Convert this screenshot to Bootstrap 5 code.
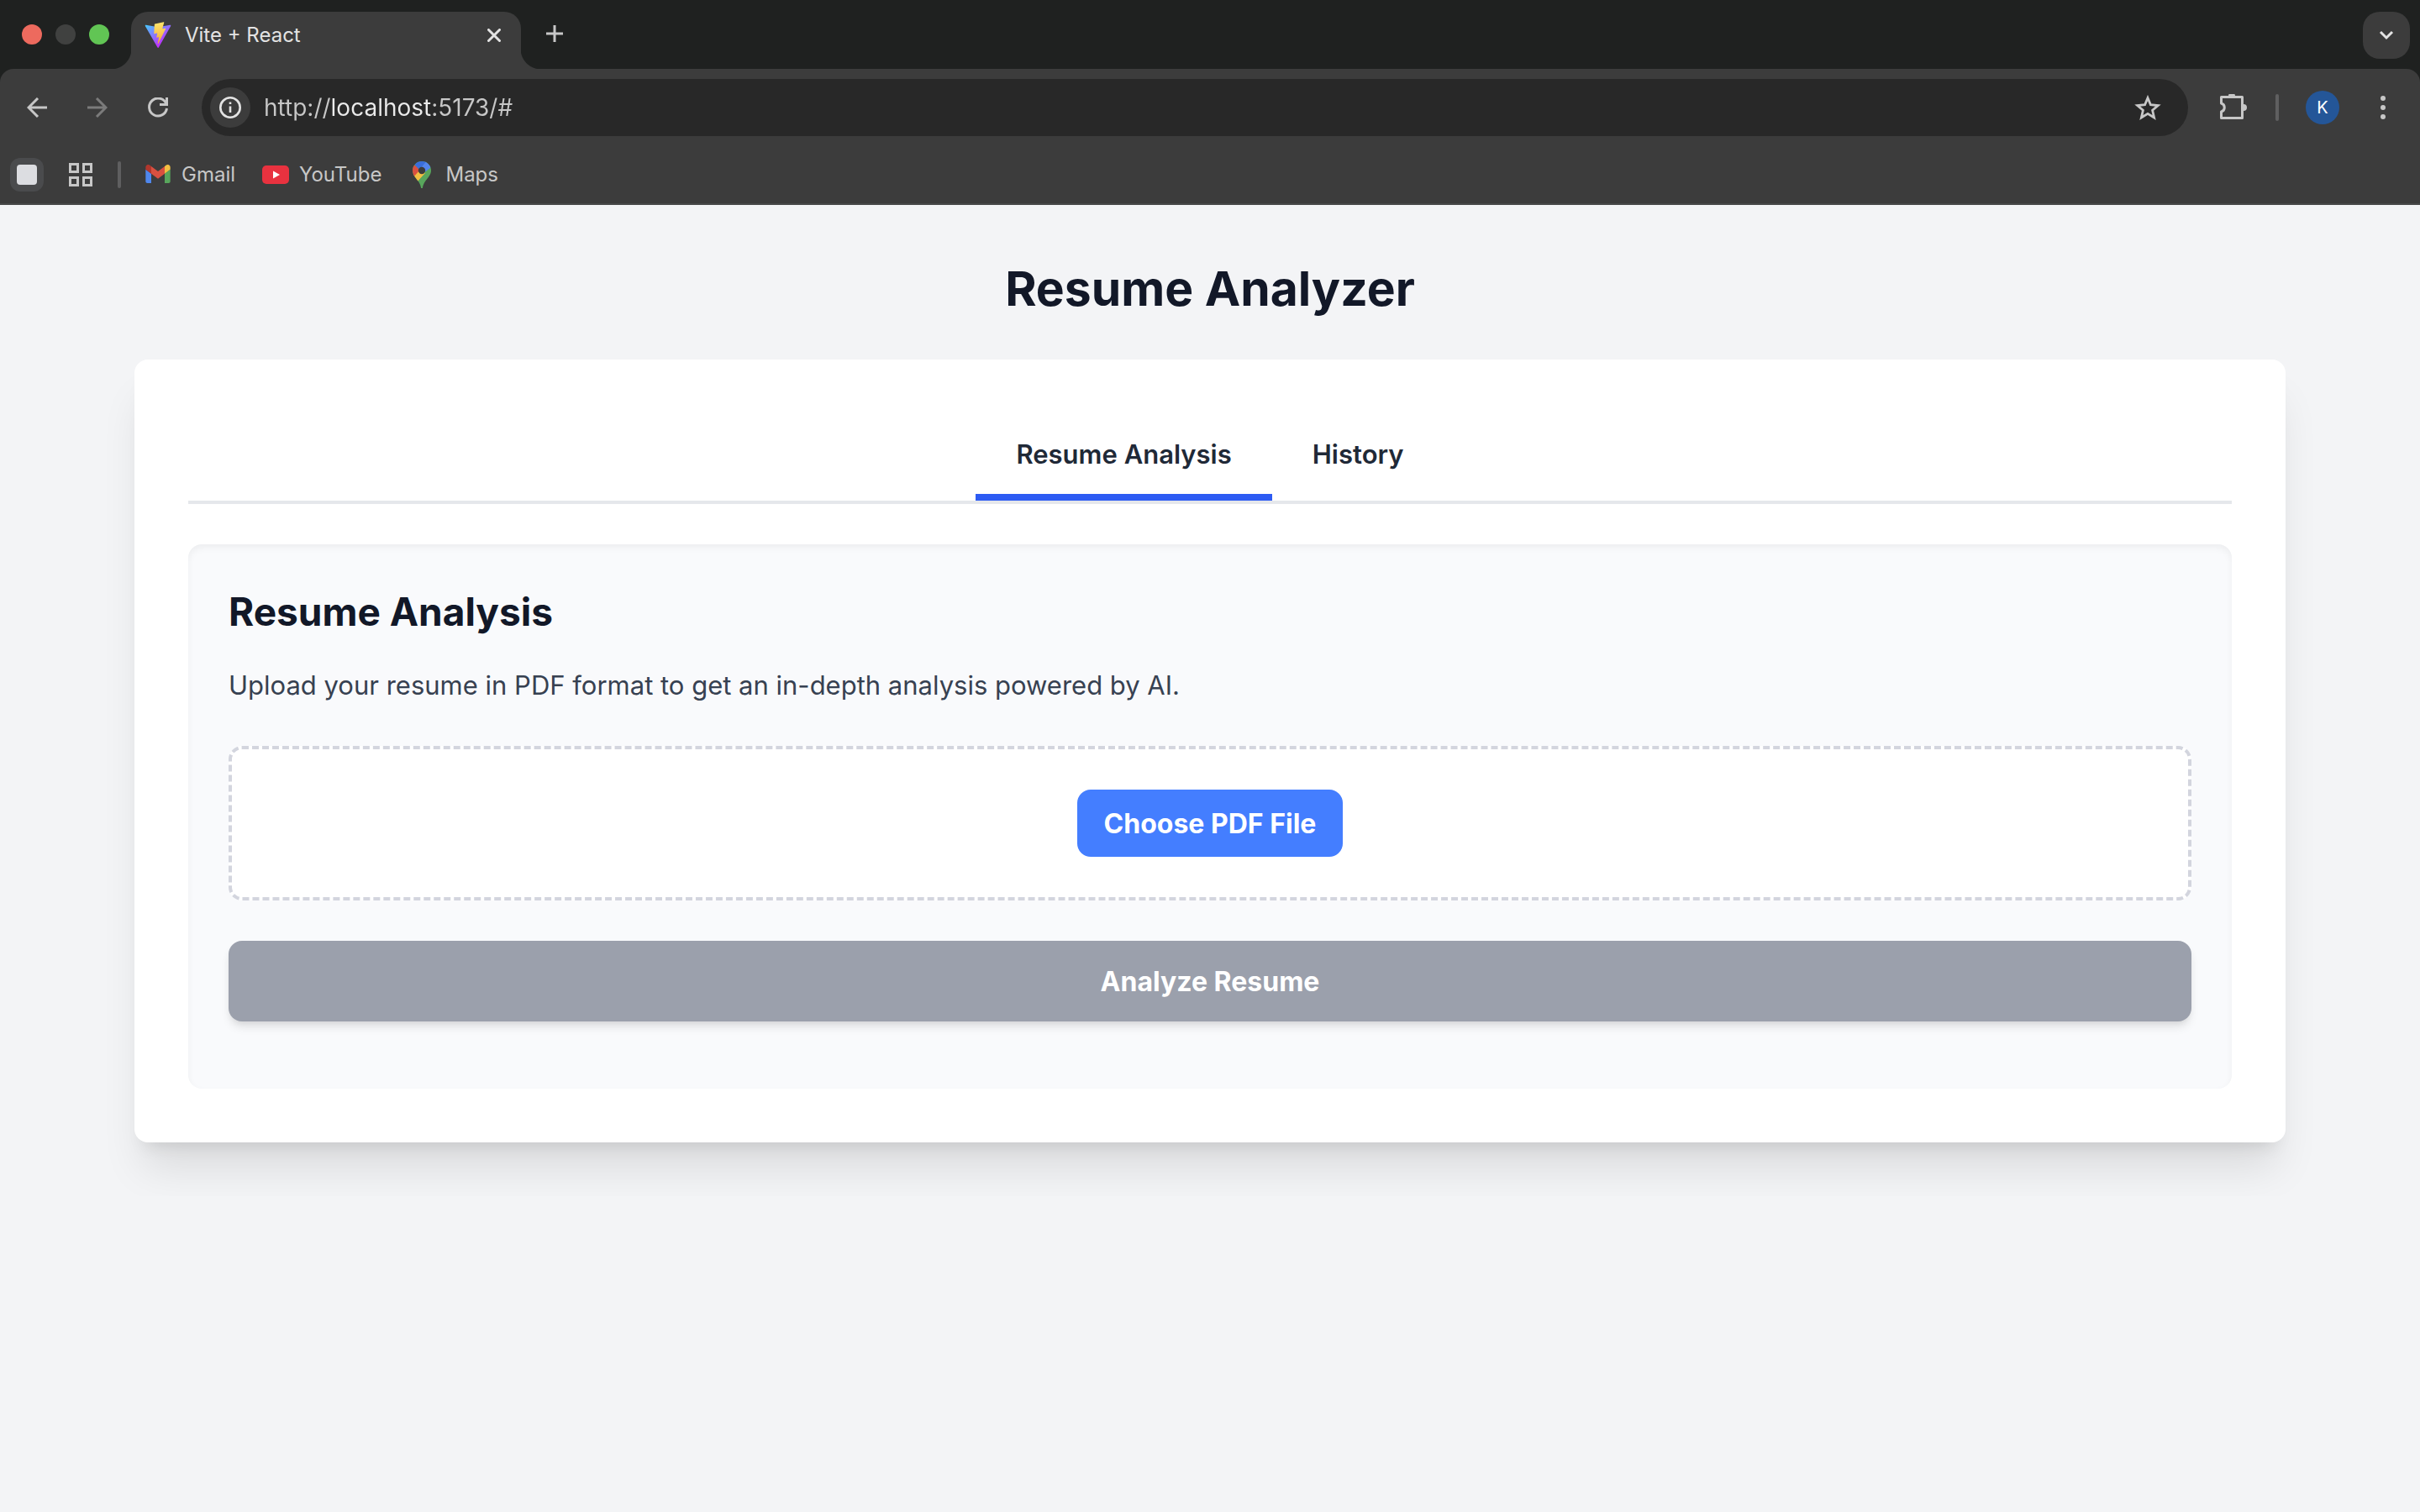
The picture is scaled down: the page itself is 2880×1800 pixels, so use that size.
<!DOCTYPE html>
<html lang="en">
<head>
<meta charset="utf-8">
<meta name="viewport" content="width=device-width, initial-scale=1">
<title>Vite + React</title>
<link href="https://cdn.jsdelivr.net/npm/bootstrap@5.3.0/dist/css/bootstrap.min.css" rel="stylesheet">
<style>
  :root {
    --strip: #1f2120;
    --chrome: #3c3c3c;
    --field: #282828;
    --glyph: #c7c7c7;
    --ink: #121828;
  }
  body {
    font-family: Inter, "Liberation Sans", sans-serif;
    font-size: 31px;
    line-height: 48px;
    color: var(--ink);
    background: #f3f4f6;
  }
  svg { display: block; flex: none; }

  /* Window chrome */
  .browser { background: var(--strip); font-size: 24px; line-height: 32px; color: #e3e3e3; }
  .browser button { border: 0; background: none; padding: 0; color: var(--glyph); display: flex; align-items: center; justify-content: center; }
  .tab-strip { height: 82px; padding: 14px 12px 0 26px; }
  .lights { gap: 16px; height: 54px; margin-right: 26px; }
  .light { width: 24px; height: 24px; border-radius: 50%; }
  .light-close { background: #ed6a5e; }
  .light-min { background: #404140; }
  .light-max { background: #61c554; }
  .page-tab { position: relative; width: 464px; height: 68px; padding: 0 24px 12px 16px; gap: 16px; border-radius: 20px 20px 0 0; background: var(--chrome); }
  .page-tab::before, .page-tab::after { content: ""; position: absolute; bottom: 0; width: 24px; height: 24px; }
  .page-tab::before { right: 100%; background: radial-gradient(circle at 0 0, transparent 24px, var(--chrome) 25px); }
  .page-tab::after { left: 100%; background: radial-gradient(circle at 100% 0, transparent 24px, var(--chrome) 25px); }
  .browser .tab-close { color: #e3e3e3; }
  .browser .tab-new { width: 80px; height: 52px; }
  .browser .tab-search { width: 56px; height: 56px; border-radius: 20px; background: var(--chrome); color: #e3e3e3; }

  .toolbar { height: 92px; padding: 0 8px; border-radius: 16px 16px 0 0; background: var(--chrome); }
  .browser .tool { width: 72px; height: 68px; }
  .browser .tool:disabled { color: #7b7b7b; }
  .address { height: 68px; margin: 0 16px; padding: 0 20px 0 10px; gap: 16px; border-radius: 34px; background: var(--field); }
  .browser .site-info { width: 48px; height: 48px; border-radius: 50%; background: var(--chrome); color: #e3e3e3; }
  /* The host is drawn brighter than the scheme and the path */
  .address input {
    border: 0; outline: 0; padding: 0; min-width: 0; font-size: 28px; line-height: 40px;
    background: linear-gradient(90deg, var(--glyph) 80px, #ebebeb 80px 201px, var(--glyph) 201px);
    -webkit-background-clip: text; background-clip: text; color: transparent;
  }
  .browser .star { width: 56px; height: 56px; }
  .rule { width: 4px; height: 32px; border-radius: 2px; background: #5f5f60; }
  .browser .avatar { width: 40px; height: 40px; border-radius: 50%; background: #245698; color: #fff; font-size: 20px; }

  .bookmarks { height: 70px; padding: 0 12px; border-bottom: 2px solid #474848; background: var(--chrome); }
  .bookmark-list { gap: 32px; margin-left: 28px; }
  .bookmarks a { gap: 12px; color: var(--glyph); text-decoration: none; }
  .browser .group-chip { width: 40px; height: 40px; border-radius: 12px; background: #4a4b4d; }
  .group-chip span { width: 24px; height: 24px; border-radius: 4px; background: #dcdde1; }
  .browser .apps { padding: 0 30px; }

  /* Page */
  .page { padding: 64px 160px; }
  .page h1 { font-size: 57px; line-height: 72px; font-weight: 700; margin-bottom: 48px; }
  .sheet { padding: 64px; border-radius: 16px; background: #fff; box-shadow: 0 40px 50px -10px rgba(0,0,0,.1), 0 16px 20px -12px rgba(0,0,0,.1); }
  .sheet .nav { border-bottom: 4px solid #e5e7eb; margin-bottom: 48px; }
  .sheet .nav-link { padding: 25px 48px 23px; border: 0; border-bottom: 8px solid transparent; background: none; font-weight: 600; color: #1f2937; }
  .sheet .nav-link.active { border-color: #2d5bf3; }
  .panel { padding: 48px 48px 80px; border-radius: 16px; background: #f9fafc; box-shadow: inset 0 4px 8px rgba(0,0,0,.05); }
  .panel h2 { font-size: 46px; line-height: 64px; font-weight: 700; margin-bottom: 32px; }
  .panel p { margin-bottom: 48px; color: #374151; }
  .drop { padding: 48px; margin-bottom: 48px; border: 4px dashed #d3d5de; border-radius: 16px; background: #fff; }
  .page .btn { border: 0; border-radius: 16px; font-size: 32px; line-height: 48px; font-weight: 700; color: #fff; }
  .page .btn-choose { padding: 17px 32px 15px; background: #447eff; }
  .page .btn-analyze { padding: 25px 24px 23px; background: #9ba0ac; opacity: 1; box-shadow: 0 8px 12px -2px rgba(0,0,0,.1), 0 4px 8px -4px rgba(0,0,0,.1); }
</style>
</head>
<body>
<header class="browser">
  <div class="tab-strip d-flex align-items-start">
    <div class="lights d-flex align-items-center">
      <span class="light light-close"></span><span class="light light-min"></span><span class="light light-max"></span>
    </div>
    <div class="page-tab d-flex align-items-center">
      <svg width="32" height="32" viewBox="0 0 410 404">
        <defs>
          <linearGradient id="va" x1="6" y1="33" x2="235" y2="344" gradientUnits="userSpaceOnUse"><stop stop-color="#41D1FF"/><stop offset="1" stop-color="#BD34FE"/></linearGradient>
          <linearGradient id="vb" x1="194" y1="9" x2="236" y2="293" gradientUnits="userSpaceOnUse"><stop stop-color="#FFE66B"/><stop offset="1" stop-color="#F2AE3C"/></linearGradient>
        </defs>
        <path fill="url(#va)" d="M399.6 59.5 215.6 388.5c-3.8 6.8-13.5 6.8-17.4.1L10.6 59.6C6.4 52.2 12.700 43.300 21 44.800l184.200 32.900c1.200.2 2.400.2 3.500 0l180.400-32.900c8.300-1.500 14.600 7.300 10.500 14.700Z"/>
        <path fill="url(#vb)" d="M293 1.600 156.800 28.300c-2.200.4-3.900 2.300-4 4.600l-8.400 141.500c-.2 3.300 2.900 5.900 6.100 5.200l37.900-8.700c3.500-.8 6.700 2.300 6 5.900l-11.300 55.100c-.8 3.700 2.700 6.900 6.300 5.800l23.400-7.100c3.600-1.100 7.100 2.100 6.300 5.800l-17.900 86.600c-1.100 5.400 6.100 8.400 9.100 3.700l2-3.100 110.900-221.400c1.900-3.700-1.300-7.900-5.400-7.100l-39 7.500c-3.700.7-6.800-2.700-5.800-6.300l25.500-88.200c1-3.600-2.100-7.100-5.800-6.300Z"/>
      </svg>
      <span class="flex-grow-1">Vite + React</span>
      <button class="tab-close" aria-label="Close tab"><svg width="16" height="16" viewBox="0 0 16 16" fill="none" stroke="currentColor" stroke-width="3" stroke-linecap="round"><path d="M1.500 1.500l13 13M14.500 1.500l-13 13"/></svg></button>
    </div>
    <button class="tab-new" aria-label="New tab"><svg width="20" height="20" viewBox="0 0 20 20" fill="none" stroke="currentColor" stroke-width="3"><path d="M10 0v20M0 10h20"/></svg></button>
    <button class="tab-search ms-auto" aria-label="Search tabs"><svg width="18" height="12" viewBox="0 0 18 12" fill="none" stroke="currentColor" stroke-width="3"><path d="M2 2l7 7 7-7"/></svg></button>
  </div>

  <div class="toolbar d-flex align-items-center">
    <button class="tool" aria-label="Back"><svg width="24" height="24" viewBox="0 0 24 24" fill="none" stroke="currentColor" stroke-width="3"><path d="M24 12H2.500M13 1 2 12l11 11"/></svg></button>
    <button class="tool" aria-label="Forward" disabled><svg width="24" height="24" viewBox="0 0 24 24" fill="none" stroke="currentColor" stroke-width="3"><path d="M0 12h21.500M11 1l11 11-11 11"/></svg></button>
    <button class="tool" aria-label="Reload"><svg width="24" height="24" viewBox="0 0 24 24" fill="none" stroke="currentColor" stroke-width="3"><path d="M22.500 0v8.500H14M22 8A10.500 10.500 0 1 0 22.500 13"/></svg></button>
    <div class="address d-flex align-items-center flex-grow-1">
      <button class="site-info" aria-label="View site information"><svg width="26" height="26" viewBox="0 0 26 26" fill="none" stroke="currentColor" stroke-width="2.600"><circle cx="13" cy="13" r="11.700"/><path d="M13 11.500v7.500M13 6.500v2.600"/></svg></button>
      <input class="flex-grow-1" type="text" value="http://localhost:5173/#" aria-label="Address">
      <button class="star" aria-label="Bookmark this tab"><svg width="32" height="30" viewBox="0 0 32 30" fill="none" stroke="currentColor" stroke-width="2.800"><path d="M16 3.500l3.400 8.200 8.900.8-6.700 5.800 2 8.700L16 22.400 8.400 27l2-8.700-6.700-5.800 8.900-.8Z"/></svg></button>
    </div>
    <button class="tool" aria-label="Extensions"><svg width="36" height="32" viewBox="-4 2 36 32"><path d="M1.500 5.500h25v25h-25v-7.500a5.200 5.200 0 0 0 0-10Z" fill="none" stroke="currentColor" stroke-width="3" stroke-linejoin="round"/><path d="M10 4.500a4 4 0 0 1 8 0ZM28 14a4 4 0 0 1 0 8Z" fill="currentColor"/></svg></button>
    <span class="rule mx-3"></span>
    <button class="avatar mx-3" aria-label="Profile K">K</button>
    <button class="tool" aria-label="Menu"><svg width="6" height="28" viewBox="0 0 6 28" fill="currentColor"><circle cx="3" cy="3" r="3"/><circle cx="3" cy="14" r="3"/><circle cx="3" cy="25" r="3"/></svg></button>
  </div>

  <nav class="bookmarks d-flex align-items-center" aria-label="Bookmarks">
    <button class="group-chip" aria-label="Tab group"><span></span></button>
    <button class="apps" aria-label="Apps"><svg width="28" height="28" viewBox="0 0 28 28" fill="none" stroke="currentColor" stroke-width="3"><path d="M1.500 1.500h9v9h-9ZM17.500 1.500h9v9h-9ZM1.500 17.500h9v9h-9ZM17.500 17.500h9v9h-9Z"/></svg></button>
    <span class="rule"></span>
    <div class="bookmark-list d-flex align-items-center">
      <a class="d-flex align-items-center" href="#">
        <svg width="32" height="24" viewBox="48 42 96 72"><path fill="#4f87ed" d="M58 108h14V74L52 59v43c0 3.320 2.690 6 6 6"/><path fill="#58a65c" d="M120 108h14c3.320 0 6-2.690 6-6V59l-20 15"/><path fill="#f2bf42" d="M120 48v26l20-15v-8c0-7.420-8.470-11.650-14.400-7.200"/><path fill="#d95040" d="M72 74V48l24 18 24-18v26L96 92"/><path fill="#b1372d" d="M52 51v8l20 15V48l-5.600-4.200c-5.940-4.450-14.400-.22-14.400 7.200"/></svg>
        <span>Gmail</span></a>
      <a class="d-flex align-items-center" href="#">
        <svg width="32" height="22" viewBox="0 0 32 22"><rect width="32" height="22" rx="5" fill="#e8323f"/><path d="M13 6.500v9l8-4.500Z" fill="#fff"/></svg>
        <span>YouTube</span></a>
      <a class="d-flex align-items-center" href="#">
        <svg width="32" height="32" viewBox="0 0 32 32"><defs><clipPath id="pin"><path d="M16 0a11 11 0 0 1 11 11c0 8-8.500 11-10 20.300a1 1 0 0 1-2 0C13.500 22 5 19 5 11A11 11 0 0 1 16 0Z"/></clipPath></defs><g clip-path="url(#pin)"><path fill="#58a65c" d="M0 0h32v32H0z"/><path fill="#f2bf42" d="M3 18.500 13 7l7 7-11 12-8-2Z"/><path fill="#d95040" d="M3 3l5 2 6 5-8.500 9.500L3 18Z"/><path fill="#5384ec" d="M14 9 20.500 0 29 2l-3 6-8 6Z"/><path fill="#3a6ddb" d="M7.500 4 12-2h8l1 2.500-8 9.500Z"/></g><circle cx="16" cy="11" r="4.200" fill="#3c3c3c"/></svg>
        <span>Maps</span></a>
    </div>
  </nav>
</header>

<main class="page">
  <h1 class="text-center">Resume Analyzer</h1>
  <div class="sheet">
    <ul class="nav justify-content-center" role="tablist">
      <li class="nav-item" role="presentation"><button class="nav-link active" id="analysis-tab" data-bs-toggle="tab" data-bs-target="#analysis" type="button" role="tab" aria-controls="analysis" aria-selected="true">Resume Analysis</button></li>
      <li class="nav-item" role="presentation"><button class="nav-link" type="button" role="tab" aria-selected="false">History</button></li>
    </ul>
    <section class="panel" id="analysis" role="tabpanel" aria-labelledby="analysis-tab">
      <h2>Resume Analysis</h2>
      <p>Upload your resume in PDF format to get an in-depth analysis powered by AI.</p>
      <div class="drop d-flex justify-content-center">
        <input class="visually-hidden" type="file" id="resume-file" accept="application/pdf">
        <label class="btn btn-choose" for="resume-file">Choose PDF File</label>
      </div>
      <button class="btn btn-analyze w-100" type="button" disabled>Analyze Resume</button>
    </section>
  </div>
</main>
<script src="https://cdn.jsdelivr.net/npm/bootstrap@5.3.0/dist/js/bootstrap.bundle.min.js"></script>
</body>
</html>
